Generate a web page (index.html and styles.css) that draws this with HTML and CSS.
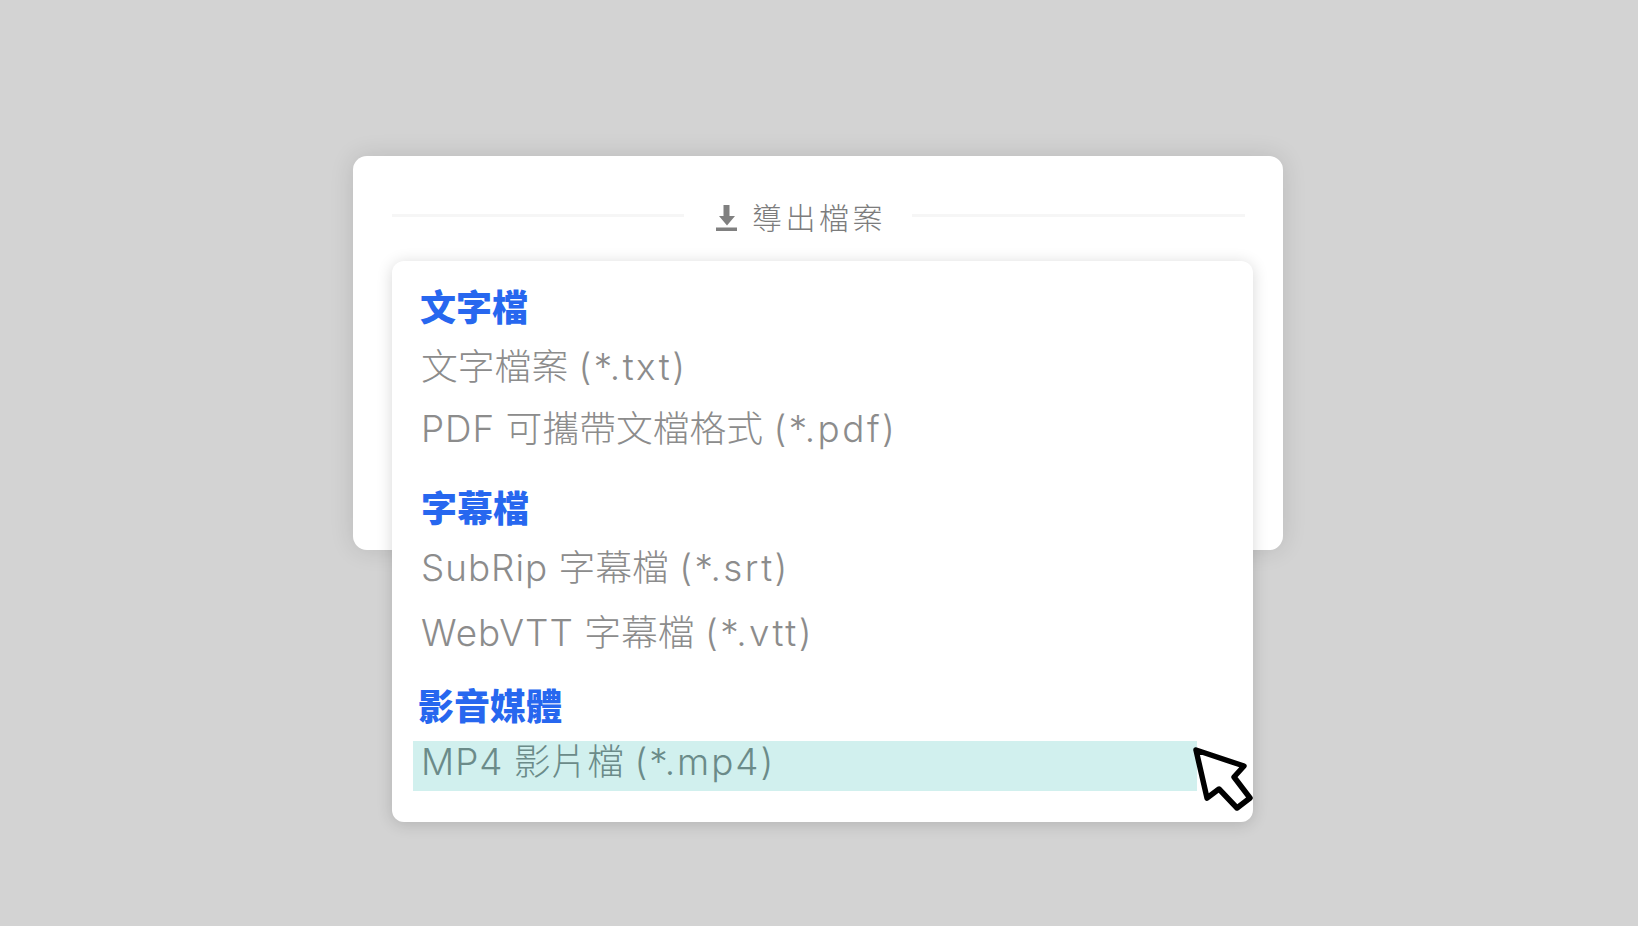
FILE: index.html
```html
<!DOCTYPE html>
<html lang="zh-Hant">

<head>
	<title>導出檔案</title>
	<link rel="stylesheet" href="styles.css">
</head>

<body>
	<section class="card">
		<div class="title-row">
			<span class="rule rule-left"></span>
			<div class="title">
				<svg class="icon" viewBox="0 0 21 26" width="21" height="26">
					<path d="M7.5 0h6v11h5.5l-8 9.5-8-9.5h4.5z" fill="#808080" />
					<rect x="0" y="22.5" width="21" height="3.5" fill="#808080" />
				</svg>
				<span class="title-text">導出檔案</span>
			</div>
			<span class="rule"></span>
		</div>

		<div class="menu">
			<p class="heading heading-first">文字檔</p>
			<p class="item item-txt">文字檔案 <span class="ext">(*.txt)</span></p>
			<p class="item item-pdf"><span class="name">PDF</span> 可攜帶文檔格式 <span class="ext">(*.pdf)</span></p>
			<p class="heading heading-sub">字幕檔</p>
			<p class="item item-srt"><span class="name">SubRip</span> 字幕檔 <span class="ext">(*.srt)</span></p>
			<p class="item item-vtt"><span class="name">WebVTT</span> 字幕檔 <span class="ext">(*.vtt)</span></p>
			<p class="heading heading-media">影音媒體</p>
			<p class="item item-active"><span class="name">MP4</span> 影片檔 <span class="ext ext-mp4">(*.mp4)</span></p>

			<svg class="cursor" viewBox="0 0 70 74" width="70" height="74">
				<path d="M6 7L54 23L44 34L60 55L47 65L29 46L17 55Z" fill="#fff" stroke="#000" stroke-width="5.5"
					stroke-linejoin="round" />
			</svg>
		</div>
	</section>
</body>

</html>
```

FILE: styles.css
```css
body,
* {
	margin: 0;
	padding: 0;
	box-sizing: border-box;
}

body {
	height: 926px;
	overflow: hidden;
	display: flex;
	justify-content: center;
	padding: 156px 2px 0 0;
	background: #d3d3d3;
	font-family: Inter, "Noto Sans CJK TC", sans-serif;
}

.card {
	position: relative;
	width: 930px;
	height: 394px;
	padding: 45px 38px 0 39px;
	background: #fff;
	border-radius: 14px;
	box-shadow: 0 0 24px rgba(0, 0, 0, 0.12);
}

.title-row {
	display: flex;
	align-items: center;
	height: 28px;
}

.rule {
	flex: 1;
	height: 3px;
	background: #f6f6f6;
}

.rule-left {
	flex: none;
	width: 292px;
}

.title {
	display: flex;
	align-items: center;
	gap: 15px;
	margin: 0 26px 0 32px;
	color: #7c7c7c;
	position: relative;
	top: 3px;
}

.title-text {
	font-size: 30px;
	line-height: 28px;
	font-weight: 300;
	letter-spacing: 3.5px;
}

.menu {
	position: absolute;
	top: 105px;
	left: 39px;
	width: 861px;
	height: 561px;
	padding: 25px 56px 0 21px;
	background: #fff;
	border-radius: 12px;
	box-shadow: 0 2px 16px rgba(0, 0, 0, 0.16);
}

.heading {
	padding-left: 7px;
	font-size: 36px;
	line-height: 44px;
	font-weight: 900;
	color: #2767ef;
}

.item {
	padding-left: 8px;
	font-size: 36.8px;
	line-height: 48px;
	font-weight: 300;
	color: #8c8c8c;
}

.name {
	letter-spacing: 1px;
}

.ext {
	letter-spacing: 2.5px;
}

.ext-mp4 {
	letter-spacing: 2px;
}

.item-txt {
	margin-top: 13px;
}

.item-pdf {
	margin-top: 14px;
}

.heading-sub {
	margin-top: 34px;
	padding-left: 8px;
}

.item-srt {
	margin-top: 13px;
}

.item-vtt {
	margin-top: 17px;
}

.heading-media {
	margin-top: 28px;
	padding-left: 5px;
}

.item-active {
	margin-top: 12px;
	height: 50px;
	line-height: 42px;
	background: #d1f0ee;
	color: #6b8b89;
}

.cursor {
	position: absolute;
	top: 482px;
	left: 798px;
}
```
